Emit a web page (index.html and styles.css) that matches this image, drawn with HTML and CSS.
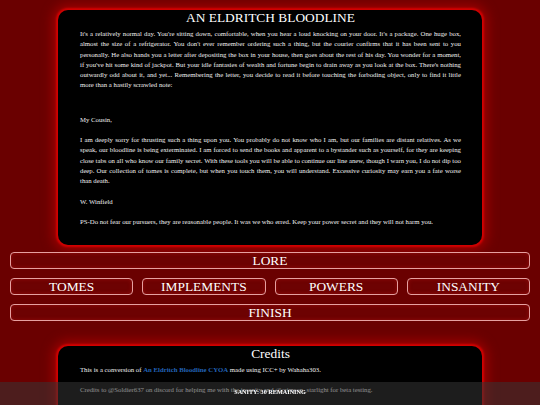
FILE: index.html
```html
<!DOCTYPE html>
<html>
<head>
<meta charset="utf-8">
<link rel="stylesheet" href="styles.css">
</head>
<body>
<div class="page">
  <div class="card">
    <h1 class="title">AN ELDRITCH BLOODLINE</h1>
    <div class="text">
      <p>It's a relatively normal day. You're sitting down, comfortable, when you hear a loud knocking on your door. It's a package. One huge box, almost the size of a refrigerator. You don't ever remember ordering such a thing, but the courier confirms that it has been sent to you personally. He also hands you a letter after depositing the box in your house, then goes about the rest of his day. You wonder for a moment, if you've hit some kind of jackpot. But your idle fantasies of wealth and fortune begin to drain away as you look at the box. There's nothing outwardly odd about it, and yet... Remembering the letter, you decide to read it before touching the forboding object, only to find it little more than a hastily scrawled note:</p>
      <div class="spacer"></div>
      <p>My Cousin,</p>
      <p>I am deeply sorry for thrusting such a thing upon you. You probably do not know who I am, but our families are distant relatives. As we speak, our bloodline is being exterminated. I am forced to send the books and apparent to a bystander such as yourself, for they are keeping close tabs on all who know our family secret. With these tools you will be able to continue our line anew, though I warn you, I do not dip too deep. Our collection of tomes is complete, but when you touch them, you will understand. Excessive curiosity may earn you a fate worse than death.</p>
      <p>W. Winfield</p>
      <p>PS-Do not fear our pursuers, they are reasonable people. It was we who erred. Keep your power secret and they will not harm you.</p>
    </div>
  </div>

  <div class="nav">
    <div class="btn wide">LORE</div>
    <div class="row">
      <div class="btn">TOMES</div>
      <div class="btn">IMPLEMENTS</div>
      <div class="btn">POWERS</div>
      <div class="btn">INSANITY</div>
    </div>
    <div class="btn wide">FINISH</div>
  </div>

  <div class="card credits">
    <h2 class="title">Credits</h2>
    <div class="text">
      <p>This is a conversion of <a class="link">An Eldritch Bloodline CYOA</a> made using ICC+ by Wahaha303.</p>
      <p>Credits to @Soldier637 on discord for helping me with the insanity and @crimson_starlight for beta testing.</p>
    </div>
  </div>
</div>
<div class="status">SANITY: 30 REMAINING</div>
</body>
</html>
```
FILE: styles.css
```css
html, body {
  margin: 0;
  padding: 0;
  background: #6a0000;
  font-family: "Liberation Serif", "Times New Roman", serif;
  color: #fff;
}
.page {
  padding: 10px 10px 0;
}
.card {
  margin: 0 48px;
  background: #000;
  border-radius: 10px;
  box-shadow: 0 0 2px 2px #d40000, 0 0 12px 5px rgba(210, 0, 0, 0.55);
  padding: 0 21px 8px 22px;
}
.title {
  margin: 0;
  font-weight: normal;
  font-size: 13.4px;
  line-height: 16px;
  text-align: center;
}
.text {
  margin-top: 3px;
  font-size: 6.75px;
  line-height: 10.3px;
  text-align: justify;
  color: #f0f0f0;
}
.text p {
  margin: 0 0 10px;
}
.spacer {
  height: 14px;
}
.nav {
  margin-top: 7px;
  display: flex;
  flex-direction: column;
  gap: 9px;
}
.row {
  display: flex;
  gap: 9px;
}
.row .btn {
  flex: 1;
}
.btn {
  height: 15px;
  border: 1px solid #e6a0a0;
  border-radius: 4px;
  background: #6d0202;
  box-shadow: inset 0 0 4px rgba(255, 40, 40, 0.25);
  font-size: 13.4px;
  line-height: 16px;
  text-align: center;
  color: #fff;
}
.credits {
  margin-top: 25px;
  padding-bottom: 40px;
}
.link {
  color: #2364b8;
  font-weight: bold;
}
.status {
  position: fixed;
  left: 0;
  right: 0;
  bottom: 0;
  height: 23px;
  box-sizing: border-box;
  padding-top: 5px;
  background: rgba(52, 52, 52, 0.55);
  text-align: center;
  font-size: 6.2px;
  font-weight: bold;
  line-height: 9px;
  color: #fff;
}
```
